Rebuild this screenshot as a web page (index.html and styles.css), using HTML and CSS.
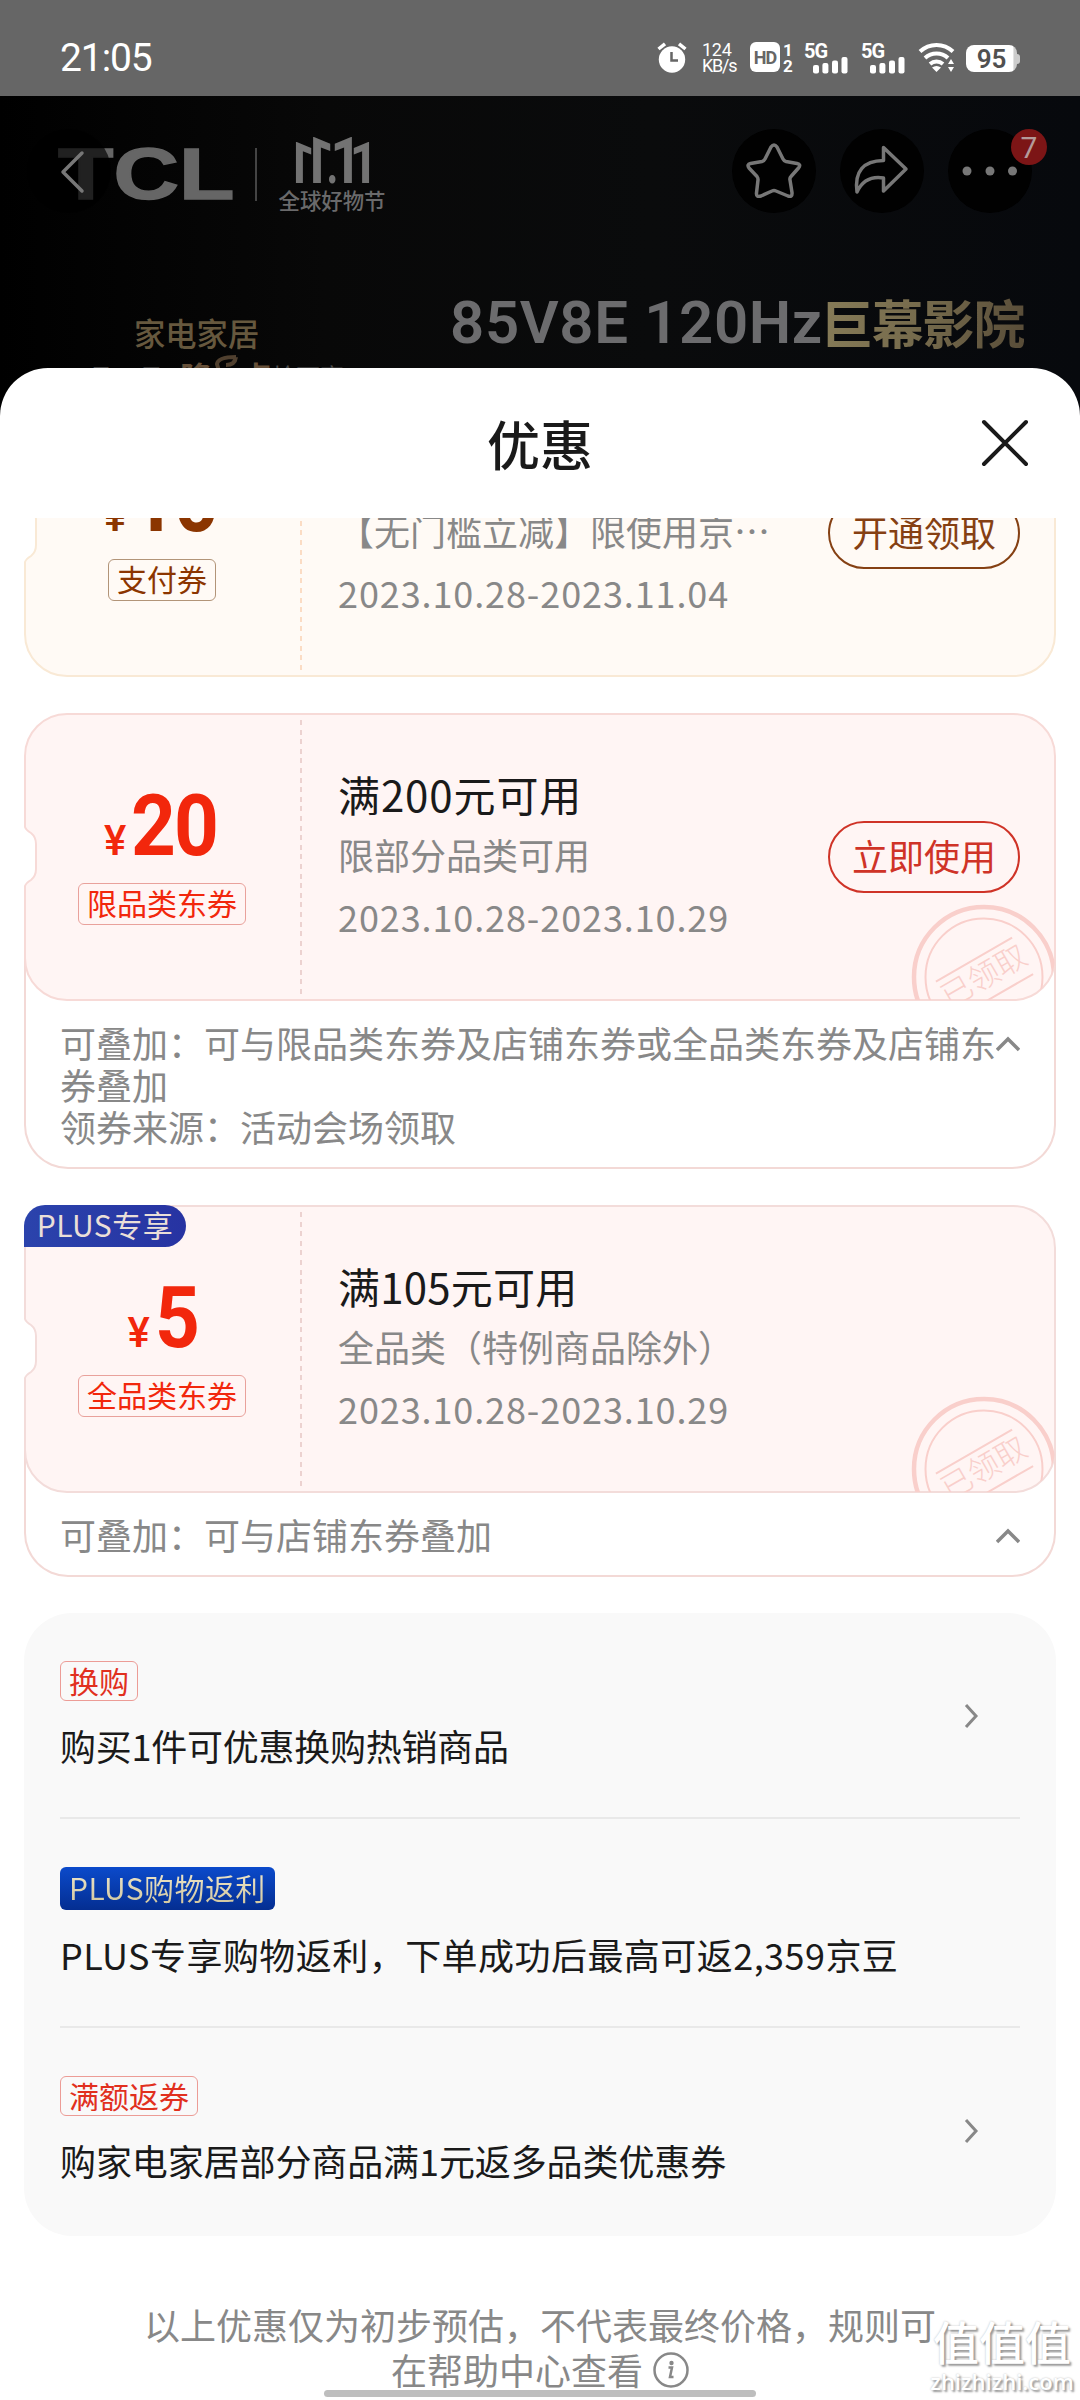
FILE: index.html
```html
<!DOCTYPE html>
<html lang="zh-CN">
<head>
<meta charset="utf-8">
<title>优惠</title>
<link rel="stylesheet" href="styles.css">
</head>
<body>
<svg class="defs" width="0" height="0">
  <defs>
    <path id="ticket" d="M43 1H989A42 42 0 0 1 1031 43V245A42 42 0 0 1 989 287H43A42 42 0 0 1 1 245V173Q2 170 7 167Q12 163 12 156V131Q12 124 7 120Q2 117 1 114V43A42 42 0 0 1 43 1Z"/>
    <clipPath id="ticket-clip"><use href="#ticket"/></clipPath>
    <g id="stamp" clip-path="url(#ticket-clip)">
      <g transform="translate(960 264)" fill="none" stroke="#f9cfcb">
        <circle r="70" stroke-width="4.5"/>
        <circle r="58.5" stroke-width="2"/>
        <g transform="rotate(-30)" stroke-width="2">
          <path d="M-44 -20H44M-46 22H44"/>
          <text x="-46" y="10" class="stamp-text">已领取</text>
        </g>
      </g>
    </g>
  </defs>
</svg>
<div class="screen">
  <header class="status">
    <span class="clock">21:05</span>
    <svg class="alarm" width="30" height="31" viewBox="0 0 30 31"><circle cx="15" cy="17.5" r="13.2" fill="#fff"/><path d="M1.5 7L8 1.8M28.500 7L22 1.800" stroke="#fff" stroke-width="3.500"/><path d="M14.500 10V18.500H21" fill="none" stroke="#666" stroke-width="2.500"/></svg>
    <span class="speed"><span>124</span><span>KB/s</span></span>
    <span class="hd">HD</span>
    <span class="sims"><span>1</span><span>2</span></span>
    <svg class="signal" width="45" height="32" viewBox="0 0 45 32"><text x="0" y="15.500" class="fiveg">5G</text><g fill="#fff"><rect x="9" y="23" width="6" height="8.500" rx="2"/><rect x="18.400" y="21" width="6" height="10.500" rx="2"/><rect x="28" y="18.500" width="6" height="13" rx="2"/><rect x="37.500" y="15" width="6" height="16.500" rx="2"/></g></svg>
    <svg class="signal second" width="45" height="32" viewBox="0 0 45 32"><text x="0" y="15.500" class="fiveg">5G</text><g fill="#fff"><rect x="9" y="23" width="6" height="8.500" rx="2"/><rect x="18.400" y="21" width="6" height="10.500" rx="2"/><rect x="28" y="18.500" width="6" height="13" rx="2"/><rect x="37.500" y="15" width="6" height="16.500" rx="2"/></g></svg>
    <svg class="wifi" width="38" height="30" viewBox="0 0 38 30"><g fill="none" stroke="#fff" stroke-width="4"><path d="M2 9.500A24 24 0 0 1 35 9.500"/><path d="M7 16A17 17 0 0 1 30 16"/><path d="M12 22A10 10 0 0 1 25 22"/></g><path d="M14 25.500Q18.500 22.500 23 25.500L18.500 30Z" fill="#fff"/><path d="M30 22L33 17L36 22ZM30 25L33 30L36 25Z" fill="#fff"/></svg>
    <span class="battery">95</span>
  </header>

  <section class="hero">
    <div class="brand">
      <span class="tcl">TCL</span>
      <span class="rule"></span>
      <div class="festival">
        <div class="eleven"><span class="flip">1</span><span class="flip tall">1</span><span class="dot">.</span><span class="tall">1</span><span>1</span></div>
        <div class="festival-name">全球好物节</div>
      </div>
    </div>
    <svg class="back" width="84" height="84" viewBox="0 0 84 84"><circle cx="42" cy="42" r="42" fill="#000" fill-opacity=".68"/><path d="M55 24L36 43L55 62" fill="none" stroke="#777" stroke-width="3.500" stroke-linecap="round" stroke-linejoin="round"/></svg>
    <nav class="actions">
      <svg width="84" height="84" viewBox="0 0 84 84"><circle cx="42" cy="42" r="42" fill="#010101"/><path d="M39 18Q42 14 45 18L51 30Q52 32 54 32.500L65 34.500Q69.500 35.500 66.500 39L59 47.500Q57.500 49 58 51L60 63.500Q60.500 68.500 56 67L44 62Q42 61.200 40 62L29 67Q24 68.500 24.500 64L26 51Q26.200 49 25 47.500L17 39Q14.500 35.500 18.500 34.500L30 32.500Q32 32 33 30Z" fill="none" stroke="#777" stroke-width="3.500" stroke-linejoin="round"/></svg>
      <svg width="84" height="84" viewBox="0 0 84 84"><circle cx="42" cy="42" r="42" fill="#010101"/><path d="M43.500 18.500L66 40L43.500 62V49Q25 46 17 63Q13 32 43.500 31.500Z" fill="none" stroke="#777" stroke-width="3.500" stroke-linejoin="round"/></svg>
      <div class="more">
        <svg width="84" height="84" viewBox="0 0 84 84"><circle cx="42" cy="42" r="42" fill="#010101"/><g fill="#777"><circle cx="19" cy="42" r="4.500"/><circle cx="42" cy="42" r="4.500"/><circle cx="64.500" cy="42" r="4.500"/></g></svg>
        <span class="count">7</span>
      </div>
    </nav>
    <div class="model"><span>85V8E 120Hz</span><span class="gold">巨幕影院</span></div>
    <div class="category">家电家居</div>
    <div class="offer"><span>10月31日</span><b>隆</b><svg width="28" height="20" viewBox="0 0 28 20"><path d="M24 2Q6 2 5 9L8 20M24 2Q23 10 14 10" fill="none" stroke="#50402f" stroke-width="4"/></svg><b>点</b><span>抢可享</span></div>
  </section>

  <main class="sheet">
    <div class="sheet-head">
      <h1>优惠</h1>
      <svg class="close" width="50" height="50" viewBox="0 0 50 50"><path d="M4 4L46 46M46 4L4 46" stroke="#1a1a1a" stroke-width="4" stroke-linecap="round"/></svg>
    </div>
    <div class="list">
      <article class="coupon cream first">
        <div class="ticket">
          <svg class="shape" width="1032" height="288"><use href="#ticket" fill="#fffaf5" stroke="#f9e9d5" stroke-width="2"/></svg>
          <div class="value"><div class="price"><i>¥</i><b>10</b></div><span class="tag">支付券</span></div>
          <div class="info"><h2>满10元可用</h2><p class="scope">【无门槛立减】限使用京⋯</p><p class="date">2023.10.28-2023.11.04</p></div>
          <span class="button">开通领取</span>
        </div>
      </article>

      <article class="coupon">
        <div class="ticket">
          <svg class="shape" width="1032" height="288"><use href="#ticket" fill="#fff5f4" stroke="#f7dad7" stroke-width="2"/><use href="#stamp"/></svg>
          <div class="value"><div class="price"><i>¥</i><b>20</b></div><span class="tag">限品类东券</span></div>
          <div class="info"><h2 class="wide">满200元可用</h2><p class="scope">限部分品类可用</p><p class="date">2023.10.28-2023.10.29</p></div>
          <span class="button">立即使用</span>
        </div>
        <div class="details">
          <p>可叠加：可与限品类东券及店铺东券或全品类东券及店铺东券叠加<br>领券来源：活动会场领取</p>
          <svg width="24" height="16" viewBox="0 0 24 16"><path d="M1 14L12 3L23 14" fill="none" stroke="#888" stroke-width="3.500"/></svg>
        </div>
      </article>

      <article class="coupon">
        <div class="ticket">
          <svg class="shape" width="1032" height="288"><use href="#ticket" fill="#fff5f4" stroke="#f3dcda" stroke-width="2"/><use href="#stamp"/></svg>
          <span class="plus">PLUS专享</span>
          <div class="value"><div class="price"><i>¥</i><b>5</b></div><span class="tag">全品类东券</span></div>
          <div class="info"><h2>满105元可用</h2><p class="scope">全品类（特例商品除外）</p><p class="date">2023.10.28-2023.10.29</p></div>
        </div>
        <div class="details">
          <p>可叠加：可与店铺东券叠加</p>
          <svg width="24" height="16" viewBox="0 0 24 16"><path d="M1 14L12 3L23 14" fill="none" stroke="#888" stroke-width="3.500"/></svg>
        </div>
      </article>

      <section class="promos">
        <div class="promo swap">
          <div><span class="label">换购</span><p>购买1件可优惠换购热销商品</p></div>
          <svg width="16" height="26" viewBox="0 0 16 26"><path d="M3 2L13 13L3 24" fill="none" stroke="#888" stroke-width="3"/></svg>
        </div>
        <div class="promo rebate">
          <div><span class="label blue"><span>PLUS购物返利</span></span><p>PLUS专享购物返利，下单成功后最高可返2,359京豆</p></div>
        </div>
        <div class="promo">
          <div><span class="label">满额返券</span><p>购家电家居部分商品满1元返多品类优惠券</p></div>
          <svg width="16" height="26" viewBox="0 0 16 26"><path d="M3 2L13 13L3 24" fill="none" stroke="#888" stroke-width="3"/></svg>
        </div>
      </section>
    </div>
    <footer class="note">
      <div>以上优惠仅为初步预估，不代表最终价格，规则可</div>
      <div class="note-second">在帮助中心查看<svg width="36" height="36" viewBox="0 0 36 36"><circle cx="18" cy="18" r="16.500" fill="none" stroke="#888" stroke-width="2.500"/><circle cx="18.500" cy="11" r="2.200" fill="#888"/><path d="M15.500 15.500H19L17 25H20.500" fill="none" stroke="#888" stroke-width="2.500"/></svg></div>
    </footer>
  </main>
  <div class="watermark"><div class="mark-cn">值值值</div><div class="mark-url">zhizhizhi.com</div></div>
  <div class="home-bar"></div>
</div>
</body>
</html>
```
FILE: styles.css
```css
* { box-sizing: border-box; }
body { margin: 0; font-family: "Noto Sans CJK SC", sans-serif; background: #fff; }
h1, h2, p { margin: 0; font-weight: 400; }
svg { display: block; flex: none; }
.defs { position: absolute; }
.screen { position: relative; width: 1080px; height: 2400px; overflow: hidden; display: flex; flex-direction: column; }

/* status bar */
.status { flex: none; height: 96px; padding: 42px 60px 0 60px; background: #666; color: #fff; display: flex; align-items: flex-start; font-family: Roboto, sans-serif; }
.clock { width: 597px; font-size: 39px; line-height: 32px; letter-spacing: -1.100px; }
.speed { width: 48px; margin-left: 15px; display: flex; flex-direction: column; font-size: 18px; line-height: 16px; letter-spacing: -.3px; }
.speed span + span { letter-spacing: -1.200px; }
.hd { width: 30px; height: 30px; border-radius: 6px; background: #fff; color: #666; font: 700 18px/31px Roboto, sans-serif; text-align: center; letter-spacing: -1px; }
.sims { width: 12px; margin: 0 0 0 2px; display: flex; flex-direction: column; text-align: center; font-size: 17px; font-weight: 700; line-height: 16px; }
.signal { margin-left: 10px; overflow: visible; }
.second { margin-left: 12px; }
.fiveg { font: 700 20px Roboto, sans-serif; fill: #fff; letter-spacing: -1px; }
.wifi { margin-left: 12px; }
.battery { position: relative; width: 51px; height: 27px; margin: 3px 0 0 10px; border-radius: 8px; background: linear-gradient(90deg, #fff 92%, #ccc 94%); color: #505050; text-align: center; font-size: 26px; font-weight: 600; line-height: 29px; }
.battery::after { content: ""; position: absolute; right: -3px; top: 9px; width: 3px; height: 10px; border-radius: 0 3px 3px 0; background: #ccc; }

/* dimmed product picture */
.hero { position: relative; flex: none; height: 272px; background: linear-gradient(90deg, #000, #080808 30%, #0a0b0c 60%, #07090d); color: #6a6a6b; }
.brand { display: flex; padding: 41px 0 0 58px; height: 120px; }
.tcl { width: 197px; font: 700 72px/75px "Liberation Sans", sans-serif; color: #666; -webkit-text-stroke: 1.500px #666; transform: scaleX(1.26); transform-origin: 0 0; }
.rule { width: 2px; height: 53px; margin-top: 11px; background: #444; }
.festival { width: 108px; margin-left: 21px; text-align: center; }
.eleven { height: 50px; display: flex; justify-content: center; align-items: baseline; font: 700 58px/50px Roboto, sans-serif; color: #737373; }
.eleven span { width: 18px; display: inline-flex; justify-content: center; transform: scaleX(.85); }
.eleven .flip { transform: scaleX(-.85); }
.eleven .tall { font-size: 65px; line-height: 48px; }
.eleven .dot { width: 9px; transform: scaleX(.7); }
.festival-name { font-size: 21.400px; line-height: 30px; margin-top: -2px; font-weight: 500; white-space: nowrap; }
.back { position: absolute; left: 27px; top: 33px; }
.actions { position: absolute; left: 732px; top: 33px; display: flex; gap: 24px; }
.more { position: relative; }
.count { position: absolute; left: 63px; top: 0; width: 36px; height: 36px; border-radius: 50%; background: #7c1516; color: #b49a9a; font: 30px/37px Roboto, sans-serif; text-align: center; }
.model { position: absolute; left: 450px; top: 192px; display: flex; align-items: center; font: 600 60px/70px Roboto, sans-serif; white-space: nowrap; color: #6c6c6e; }
.model span:first-child { width: 371px; letter-spacing: .6px; }
.gold { font: 700 52px/70px "Noto Sans CJK SC", sans-serif; letter-spacing: -1.200px; color: transparent; background: linear-gradient(100deg, #877c58, #756a4c 50%, #584c38); background-clip: text; margin-top: -3px; }
.category { position: absolute; left: 134px; top: 216px; font-size: 31.300px; line-height: 42px; font-weight: 500; color: #66583e; }
.offer { position: absolute; left: 62px; top: 259px; height: 13px; overflow: hidden; display: flex; font-size: 24px; line-height: 42px; color: #4c4c4c; }
.offer span { width: 118px; }
.offer b { width: 32px; color: #665039; font-size: 32px; line-height: 42px; }

/* bottom sheet */
.sheet { flex: none; height: 2032px; background: #fff; border-radius: 48px 48px 0 0; display: flex; flex-direction: column; position: relative; }
.hero::after { content: ""; position: absolute; left: 0; right: 0; top: 272px; height: 60px; background: linear-gradient(90deg, #000, #080808 30%, #0a0b0c 60%, #07090d); }
.sheet-head { flex: none; height: 150px; display: grid; grid-template-columns: 1fr auto 1fr; align-items: center; padding: 0 50px; }
.sheet-head h1 { grid-column: 2; font-size: 53px; font-weight: 500; line-height: 70px; color: #1a1a1a; margin-top: -1px; }
.close { justify-self: end; }
.list { flex: none; height: 1718px; overflow: hidden; padding: 0 24px; display: flex; flex-direction: column; gap: 36px; }
.coupon { flex: none; --main: #f2270c; --line: #e9a19b; --button: #cf3327; }
.cream { --main: #8b3500; --line: #b29478; --button: #854013; }
.first { margin-top: -129px; }
.ticket { position: relative; z-index: 1; height: 288px; display: grid; grid-template-columns: 276px 1fr 192px; padding-right: 36px; }
.shape { position: absolute; left: 0; top: 0; z-index: -1; }
.stamp-text { font-size: 31px; font-weight: 300; fill: #f9cfcb; stroke: none; }
.value { position: relative; height: 288px; display: flex; flex-direction: column; align-items: center; }
.value::after { content: ""; position: absolute; left: 276px; top: 7px; width: 2px; height: 274px; background: repeating-linear-gradient(#ecd2d0 0 5px, transparent 5px 9.600px); }
.cream .value::after { background: repeating-linear-gradient(#fbdcc4 0 5px, transparent 5px 9.600px); }
.price { height: 170px; display: flex; align-items: baseline; padding-top: 63px; font-family: Roboto, sans-serif; line-height: 100px; color: var(--main); }
.price i { font-style: normal; font-size: 42px; font-weight: 500; margin-right: 5px; }
.price b { font-size: 85px; font-weight: 700; letter-spacing: -2px; transform: scaleX(.92); transform-origin: 0 50%; margin-right: -5px; }
.tag { height: 42px; padding: 0 8px; border: 1.500px solid var(--line); border-radius: 6px; font-size: 30px; line-height: 37px; color: var(--main); white-space: nowrap; }
.info { padding: 50px 0 0 38px; color: #888; white-space: nowrap; }
.info h2 { font-size: 42px; line-height: 61px; color: #1a1a1a; letter-spacing: .2px; }
.info h2.wide { letter-spacing: .9px; }
.info p { font-size: 36px; line-height: 61px; }
.info .date { letter-spacing: .9px; line-height: 63px; }
.button { align-self: center; height: 72px; border: 2px solid var(--button); border-radius: 36px; text-align: center; font-size: 36px; line-height: 65px; color: var(--button); }
.plus { position: absolute; left: 0; top: 0; z-index: 2; width: 162px; height: 42px; border-radius: 22px 22px 22px 0; background: linear-gradient(90deg, #2b43ac, #2733a2); color: #eadfd8; font-size: 30px; line-height: 39px; text-align: center; letter-spacing: .5px; }
.details { margin-top: -48px; padding: 68px 34px 20px 34px; border: 2px solid #f3d9d6; border-top: 0; border-radius: 0 0 44px 44px; display: flex; justify-content: space-between; font-size: 36px; line-height: 42px; color: #888; }
.details p { width: 936px; }
.details svg { margin-top: 15px; }

.promos { flex: none; height: 623px; border-radius: 48px; background: #f9f9f9; padding: 0 36px; }
.promo { height: 206px; padding: 48px 41px 0 0; border-bottom: 2px solid #e9e9e9; display: flex; justify-content: space-between; color: #1a1a1a; font-size: 36px; }
.promo p { line-height: 54px; margin-top: 17px; white-space: nowrap; }
.promo > svg { margin-top: 42px; }
.swap p { letter-spacing: -.25px; }
.label { display: block; width: fit-content; height: 40px; padding: 0 8px; border: 1.500px solid #ec9c96; border-radius: 6px; color: #e1301e; font-size: 30px; line-height: 36px; }
.rebate { height: 209px; }
.rebate p { margin-top: 17px; letter-spacing: .45px; }
.blue { height: 43px; border: 0; padding: 0 9px; background: linear-gradient(#0b4acb, #042e91); line-height: 41px; letter-spacing: .4px; }
.blue span { color: transparent; background: linear-gradient(#f0e9d0, #cfc49a); background-clip: text; display: block; }
.promo:last-child { border: 0; }
.promo:last-child p { letter-spacing: -.1px; }

.note { padding-top: 66px; text-align: center; font-size: 36px; line-height: 45px; color: #888; }
.note-second { display: flex; justify-content: center; align-items: center; gap: 10px; }
.watermark { position: absolute; left: 929px; top: 2312px; width: 146px; text-align: center; color: #fff; text-shadow: 2px 2px 2px #999, 0 0 2px #bbb; white-space: nowrap; }
.mark-cn { font-size: 46px; line-height: 56px; font-weight: 500; }
.mark-url { font: 600 22px/26px "Open Sans", sans-serif; margin-top: 0; }
.home-bar { position: absolute; left: 324px; top: 2390px; width: 432px; height: 7px; border-radius: 4px; background: #bebebe; }
```
